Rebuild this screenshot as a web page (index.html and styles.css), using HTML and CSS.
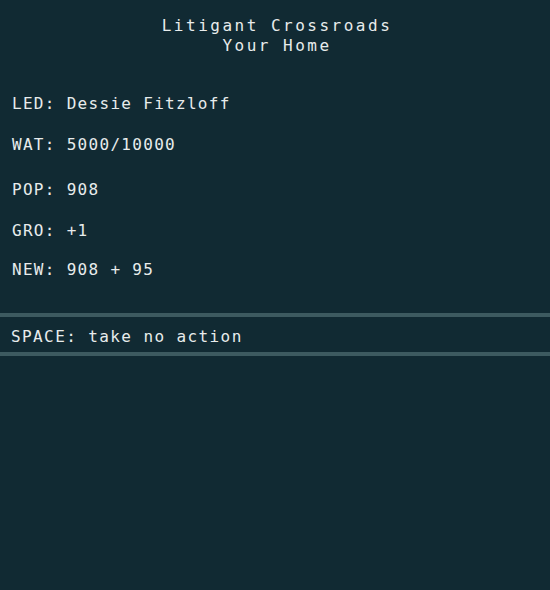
FILE: index.html
```html
<!DOCTYPE html>
<html>
<head>
<meta charset="utf-8">
<link rel="stylesheet" href="styles.css">
</head>
<body>
<div class="screen">
  <header class="title">
    <div class="title-line">Litigant Crossroads</div>
    <div class="title-line">Your Home</div>
  </header>
  <section class="stats">
    <div class="row">LED: Dessie Fitzloff</div>
    <div class="row">WAT: 5000/10000</div>
    <div class="row row-group">POP: 908</div>
    <div class="row">GRO: +1</div>
    <div class="row row-tight">NEW: 908 + 95</div>
  </section>
  <div class="action">SPACE: take no action</div>
</div>
</body>
</html>
```
FILE: styles.css
```css
html, body {
  margin: 0;
  padding: 0;
  background: #112a33;
}
.screen {
  width: 550px;
  height: 590px;
  background: #112a33;
  color: #e8ecec;
  font-family: "DejaVu Sans Mono", "Liberation Mono", monospace;
  font-size: 16px;
  line-height: 20px;
  display: flex;
  flex-direction: column;
}
.title {
  padding-top: 16px;
  text-align: center;
  letter-spacing: 2.5px;
  padding-left: 4px;
}
.stats {
  display: flex;
  flex-direction: column;
  gap: 21px;
  padding-left: 12px;
  margin-top: 38px;
  letter-spacing: 1.3px;
}
.row-group {
  margin-top: 4px;
}
.row-tight {
  margin-top: -2px;
}
.action {
  margin-top: 33px;
  border-top: 4px solid #3d5a60;
  border-bottom: 4px solid #3d5a60;
  padding: 10px 0 5px 11px;
  letter-spacing: 1.4px;
}
```
